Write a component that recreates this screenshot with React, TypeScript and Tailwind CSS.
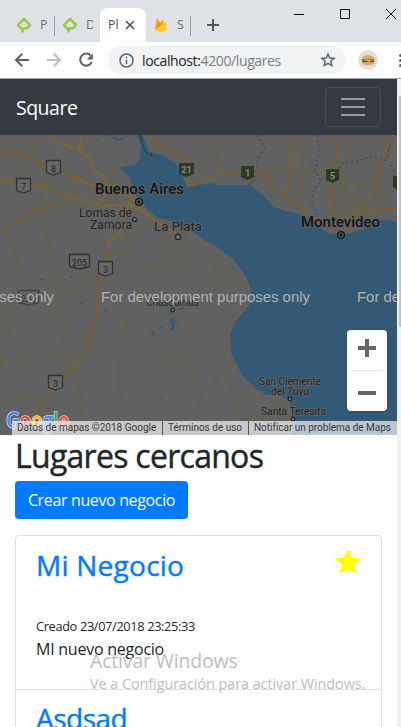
import React from "react";

const ui = "font-['Open_Sans','Noto_Sans',sans-serif]";

function LeafLogo() {
  return (
    <svg className="size-4 shrink-0" viewBox="0 0 16 16" fill="none" stroke="#98ca3f" strokeWidth="2.5" strokeLinejoin="round">
      <path d="M6.600 15.400v-2.800L2 8l6-6 6 6-3.300 3.300H7.200" />
    </svg>
  );
}

function FirebaseLogo() {
  return (
    <svg className="h-4 w-3.5 shrink-0" viewBox="0 0 14 16">
      <path d="M1 12.8 3 .8 6.5 6 8.5 2.6 12 12.8Z" fill="#ffa000" />
      <path d="M1 12.8 6.5 5.6 8.2 8Z" fill="#f57c00" />
      <path d="M1 12.8 11.6 4.2 13 12.8 7.3 15.8Z" fill="#ffca28" />
    </svg>
  );
}

function BrowserTabs() {
  return (
    <div className={`flex h-[42px] shrink-0 bg-[#dee1e6] text-[12.5px] text-[#6c7075] ${ui}`}>
      <div className="mt-[17px] ml-4 flex h-4 w-[38px] items-center gap-2">
        <LeafLogo />
        <span className="w-[7px] overflow-hidden">P</span>
      </div>
      <div className="mt-4 h-5 w-px bg-[#9a9ea3]" />
      <div className="mt-[17px] ml-[7px] flex h-4 w-[38px] items-center gap-2">
        <LeafLogo />
        <span className="w-[7px] overflow-hidden">D</span>
      </div>
      <div className="mt-2 flex h-[34px] w-[46px] items-center rounded-t-lg bg-white pl-2 text-[#4b4f54]">
        <span className="w-[10px] overflow-hidden whitespace-nowrap">Pl</span>
        <svg className="ml-[7px] size-[10px]" viewBox="0 0 10 10" stroke="#55595e" strokeWidth="1.7">
          <path d="m1 1 8 8m0-8L1 9" />
        </svg>
      </div>
      <div className="mt-[17px] ml-2 flex h-4 w-[36px] items-center gap-[9px]">
        <FirebaseLogo />
        <span className="w-[7px] overflow-hidden">S</span>
      </div>
      <div className="mt-4 h-5 w-px bg-[#9a9ea3]" />
      <svg className="mt-[19px] ml-4 size-3" viewBox="0 0 12 12" stroke="#55595e" strokeWidth="2">
        <path d="M6 0v12M0 6h12" />
      </svg>
      <svg className="ml-auto h-7 w-[110px] shrink-0" viewBox="0 0 110 28" fill="none" stroke="#111">
        <path d="M3 14.5h10M49.5 9.5h9v9h-9zM95 9l10 10m0-10L95 19" />
      </svg>
    </div>
  );
}

function AddressBar() {
  return (
    <div className="flex h-9 shrink-0 items-center bg-white">
      <svg className="h-9 w-[108px] shrink-0" viewBox="0 0 108 36" fill="none" stroke="#5f6368" strokeWidth="2">
        <path d="M29 18H16m6.2-6.2L16 18l6.2 6.2" />
        <path d="M47 18h13m-6.2-6.2L60 18l-6.2 6.2" stroke="#bcbec0" />
        <path d="M90.6 13.5a6 6 0 1 0 1.2 6.3" />
        <path d="M92.8 11.5v6h-6Z" fill="#5f6368" stroke="none" />
      </svg>
      <div className="flex h-7 w-[238px] shrink-0 items-center rounded-full bg-[#f1f3f4] pl-[11px]">
        <svg className="size-[15px]" viewBox="0 0 15 15" fill="none" stroke="#5f6368" strokeWidth="1.5">
          <circle cx="7.5" cy="7.5" r="6.5" />
          <path d="M7.5 6.6v4.6M7.5 3.7v1.6" />
        </svg>
        <span className={`ml-2 w-[140px] text-[14px] tracking-[-0.38px] whitespace-nowrap text-[#202124] ${ui}`}>
          localhost:<span className="text-[#777b80]">4200/lugares</span>
        </span>
        <svg className="ml-[38px] size-4 shrink-0" viewBox="0 0 16 16" fill="none" stroke="#5f6368" strokeWidth="1.5">
          <path d="m8 2 1.8 4 4.3.4-3.2 2.9.9 4.3L8 11.4l-3.8 2.2.9-4.3-3.2-2.9L6.200 6Z" />
        </svg>
      </div>
      <svg className="ml-3 size-5 shrink-0" viewBox="0 0 20 20">
        <circle cx="10" cy="10" r="10" fill="#dedede" />
        <path d="M4 9c0-5 12-5 12.500 0Z" fill="#d9a868" />
        <path d="M3.500 9h13v1.500h-13Z" fill="#6f8f42" />
        <path d="M4 10.500h12v1.800H4Z" fill="#6b3a25" />
        <path d="m6 9.500 8 .5-3 2Z" fill="#f5bb35" />
        <path d="M4 12.300h12.500c0 4-12.500 4-12.500 0Z" fill="#dda864" />
      </svg>
      <div className="ml-[21px] flex flex-col gap-[2px]">
        <i className="size-[3px] rounded-full bg-[#5f6368]" />
        <i className="size-[3px] rounded-full bg-[#5f6368]" />
        <i className="size-[3px] rounded-full bg-[#5f6368]" />
      </div>
    </div>
  );
}

type Label = { x: number; y: number; w: number; s: number; t: string; b?: boolean };

const labels: Label[] = [
  { x: 95, y: 59, w: 89, s: 14.5, t: "Buenos Aires", b: true },
  { x: 301, y: 92, w: 79, s: 14.5, t: "Montevideo", b: true },
  { x: 79, y: 82, w: 53, s: 12, t: "Lomas de" },
  { x: 90, y: 94, w: 42, s: 12, t: "Zamora" },
  { x: 154, y: 96, w: 48, s: 13, t: "La Plata" },
  { x: 146, y: 170.5, w: 53, s: 10.5, t: "Chascomús" },
  { x: 259, y: 250, w: 62, s: 10.5, t: "San Clemente" },
  { x: 271, y: 260, w: 38, s: 10.5, t: "del Tuyu" },
  { x: 261, y: 279.5, w: 65, s: 10.5, t: "Santa Teresita" },
];

const shields = [
  { x: 53.5, y: 33, n: "8", w: 14 },
  { x: 23.500, y: 51, n: "7", w: 14 },
  { x: 79.5, y: 127, n: "205", w: 20 },
  { x: 105.5, y: 134, n: "3", w: 14 },
  { x: 28.5, y: 163, n: "205", w: 20 },
  { x: 55.5, y: 248, n: "3", w: 14 },
];

const greenShields = [
  { x: 186.500, y: 35, n: "21", w: 15 },
  { x: 247.500, y: 38, n: "1", w: 13 },
  { x: 332.500, y: 41, n: "5", w: 13 },
  { x: 398, y: 48, n: "", w: 10 },
];

const cities = [
  { x: 134.500, y: 84.500, r: 2 },
  { x: 178, y: 102, r: 2.6 },
  { x: 172.700, y: 175, r: 1.8 },
  { x: 290, y: 264, r: 1.8 },
  { x: 293, y: 284, r: 1.8 },
];

function ZoomControl() {
  return (
    <div className="absolute top-[195px] right-[10px] flex h-[81px] w-10 flex-col items-center rounded-sm bg-white shadow">
      <svg className="h-10 w-10" viewBox="0 0 40 40" fill="#666">
        <path d="M18 9h4v7h7v4h-7v7h-4v-7h-7v-4h7Z" />
      </svg>
      <div className="h-px w-[30px] bg-[#e6e6e6]" />
      <svg className="h-10 w-10" viewBox="0 0 40 40" fill="#666">
        <path d="M11 20h18v4H11Z" />
      </svg>
    </div>
  );
}

function MapView() {
  return (
    <div className="relative h-[300px] w-[397px] shrink-0 overflow-hidden bg-[#616161]">
      <svg className="block h-[300px] w-[397px]" viewBox="0 0 397 300" fill="none">
        <path
          fill="#345975"
          d="M137 0 141 10 140 23 135 30 120 32 130 43 133 55 138 63 148 75 158 83 178 87 188 93 207 107 218 113 232 123 243 137 250 150 252 167 235 187 230 200 231 218 242 240 255 253 266 260 280 260 291 267 292 287 292 300H397V87L390 85 376 86 363 95 346 99 329 99 316 90 303 80 286 76 273 72 265 62 250 50 218 50 212 48 206 49 188 52 180 37 175 28 162 20 150 18 142 0Z"
        />
        <path
          fill="#345975"
          d="m108 0 11 4 8-3-5 4-5 1Zm8 5 2 8-2-5Zm-20-2 4 4-2 1Zm30 15 5 4-2-1ZM40 144h4v1h-4Zm30-3h2v2h-2ZM79 169l4-4v3l-4 3Zm25 5 5 2-3 1Zm46 24 3-2 2 5Zm8-5 5-2-2 3Zm12-18 2 8 4-2-2 4 1 7-3 4-3-1 3-4-2-6 2-3-3-3Zm9-2 5-1-3 3Zm-4 12 4-1-1 2-4 1Zm38 62 3-2 3 2Zm-54 17 2-1 2 2Zm85 20 2 1-1 2Z"
        />
        <g stroke="#68603f" strokeWidth="1">
          <path d="m35 0 3 20 8 20-5 20 4 27 5 28 5 26 13 17 3 3 14-12 20-8M0 91l4 5 8 7 7 32 9 12 14 1 16-9 12-4M82 0l-8 17-11 11-23-1-6 2-16 5-10 7 0 8M92 148l8-12 6-20 14 4 15-1M74 71l22 22 8 11 2 9M126 83l2 21 3 11M77 39l-4 19 10 16 10 7 10 2M109 31l-4 13-7 8 8 12 8 0" />
          <path d="M161 96l-15-8-7 13-4 2M157 98l13 11 14 19 36 16 30 8M166 110l-5 33-15 16-11 14M187 94l-7 31-38 12-7 8M199 105l17 5 2 8 5 10 4-5 5 3M218 114l-5 36M0 189l10-10 10-7 15-12 30-8M0 182l10 6 23 9 18 18 21 13-10-23 6-18-16-15-2-9M0 223l15 1 13-3 10 3 13-6 19 3 3 6M11 188 5 211 0 230M74 229l8 41-7 30M0 267l20-8 14 6 11 17 5 18M112 170l14 20-8 20 2 45 7 45M126 190l14 12 19 24 32 3M175 177l5 30 12 23 9 27-1 13-8 19-9 11M265 275l30-10-5 22-20 2M235 184l-7 20-3 15 6 33 8 33 14-4 24 5" />
          <path d="M208 0l-16 20-10 8M230 0l-10 15-20 20-2 12M212 12l11 26M300 0l12 29-6 30-10 16M295 0l8 15 1 25-14 31M266 34l23 1 29 3M321 35l14 34 3 13M315 39l38 8 25-2 19-12M348 37l-5 25-15 20M350 62l17-15 20 25-45 8-15-2M331 32l13-10 20-4M397 1l-14 4-12 16M397 17l-27 17 15 30 12 1M331 55l23 13 10 4M322 60l30 3 8-7M339 37l6 38-6 17M358 43l-4 22-17 25M377 38l-3 28-32 25" />
        </g>
        <g stroke="#7c6226" strokeWidth="1.4">
          <path d="m0 14 20 6 15 5 8 6 10 1 13 8 15 3M0 47l9-3 12 6h25l9 7 13 3M0 95l35-19 40-12M108 115l-2 24-8 11M101 150l-5 17 2 17-9 15 0 15-18 21-24 27-13 16-4 14M148 0l7 8 16 7 10 5 7 32 32-13 22-2 18 0 14 12M334 0l4 12-4 18-4 25 5 40M291 0l1 32-6 29M388 0l-1 19-8 12-7 27-27 29M266 46l23 19 22 14 13 14M345 96l14-16 24-7 14 1" />
        </g>
        <g stroke="#78673b" strokeWidth="2.2">
          <path d="m50 0 4 6 25 9 3-15M79 15l10 8 4 11 10 8 5 8M68 60l24 8 10 3 33-1M97 69l15-15M107 110l14-15 7-22 4-15M80 44l9 6 28 0M111 53l14 7M127 70l18 8 15 11 16 9M116 51l19 16M135 67l8 11" />
        </g>
        <g stroke="#464b52" strokeWidth="1.400" strokeDasharray="2 3">
          <path d="m257 0 8 13-7 11-3 19-6 7M317 0l2 16-4 20 6 10-6 7-2 8-3 4 7 15M390 10l-4 15-13-4-18 6-13 1-6 10M391 30l4 10" />
        </g>
        <path d="m140 0 5 16 6 5 1-4" stroke="#32363a" />
        <path d="m312 71 6 6 8 4" stroke="#356c96" strokeWidth="1.500" />

        {shields.map((s, i) => (
          <g key={i} opacity={i === 4 ? 0.65 : 1}>
            <path
              d={`M${s.x - s.w / 2} ${s.y - 7.500}h${s.w}v12L${s.x} ${s.y + 7}L${s.x - s.w / 2} ${s.y + 4.500}Z`}
              fill="#666" stroke="#303030" strokeWidth="1.300" strokeLinejoin="round"
            />
            <text x={s.x} y={s.y + 3.500} textAnchor="middle" fill="#222" className="font-[Roboto,sans-serif] text-[9px]">{s.n}</text>
          </g>
        ))}
        {greenShields.map((s, i) => (
          <g key={i}>
            <path d={`M${s.x - s.w / 2} ${s.y - 7}h${s.w}v11L${s.x} ${s.y + 7}L${s.x - s.w / 2} ${s.y + 4}Z`} fill="#2d3926" />
            <text x={s.x} y={s.y + 3} textAnchor="middle" fill="#858a82" className="font-[Roboto,sans-serif] text-[9px] font-bold">{s.n}</text>
          </g>
        ))}
        {cities.map((c, i) => (
          <circle key={i} cx={c.x} cy={c.y} r={c.r} stroke="#222" strokeWidth="1.200" fill="#777" />
        ))}
        {[[139, 67], [341, 100]].map(([x, y]) => (
          <g key={x}>
            <circle cx={x} cy={y} r="3.400" fill="#666" stroke="#161616" strokeWidth="1.400" />
            <circle cx={x} cy={y} r="1.700" fill="#161616" />
          </g>
        ))}
        {labels.map((l) => (
          <text
            key={l.t} x={l.x} y={l.y} textLength={l.w} lengthAdjust="spacingAndGlyphs" fontSize={l.s}
            fontWeight={l.b ? 500 : 400} fill={l.b ? "#121212" : "#242424"}
            stroke="#686868" strokeWidth="2" strokeOpacity=".65" paintOrder="stroke"
            className="font-[Roboto,sans-serif]"
          >
            {l.t}
          </text>
        ))}
        <g fill="#b2b2b2" className="font-['Liberation_Sans',Arial,sans-serif] text-[15px]">
          <text x="-155" y="167" textLength="209" lengthAdjust="spacingAndGlyphs">For development purposes only</text>
          <text x="101" y="167" textLength="209" lengthAdjust="spacingAndGlyphs">For development purposes only</text>
          <text x="357" y="167" textLength="209" lengthAdjust="spacingAndGlyphs">For development purposes only</text>
        </g>
        <text x="6" y="293" textLength="63" lengthAdjust="spacingAndGlyphs" stroke="#d5d5d5" strokeWidth="1.600" paintOrder="stroke" className="font-['Open_Sans',sans-serif] text-[22px] font-semibold">
          <tspan fill="#4285f4">G</tspan><tspan fill="#e94b3c">o</tspan><tspan fill="#f4b51e">o</tspan><tspan fill="#4285f4">g</tspan><tspan fill="#34a853">l</tspan><tspan fill="#e94b3c">e</tspan>
        </text>
      </svg>
      <div className="absolute right-0 bottom-0 flex h-[14px] w-[385px] bg-[#f5f5f5]/70 font-[Roboto,sans-serif] text-[10px] leading-[14px] whitespace-nowrap text-[#383838]">
        <span className="w-[150px] pl-[5px]">Datos de mapas ©2018 Google</span>
        <span className="w-[86px] border-l border-[#555] pl-[5px]">Términos de uso</span>
        <span className="flex-1 border-l border-[#555] pl-[5px] tracking-[-0.02px]">Notificar un problema de Maps</span>
      </div>
      <ZoomControl />
    </div>
  );
}

function Places() {
  return (
    <main className={`flex flex-col items-start px-[15px] text-[#212529] ${ui}`}>
      <h2 className="mt-[2px] mb-2 text-[32px] leading-[38px] font-medium tracking-[-0.72px] whitespace-nowrap [-webkit-text-stroke:0.4px]">Lugares cercanos</h2>
      <button className="-mt-[2px] h-[38px] w-[173px] rounded bg-[#007bff] text-[16px] tracking-[-0.36px] whitespace-nowrap text-white">
        Crear nuevo negocio
      </button>
      <section className="mt-4 w-[367px] rounded-t border border-[#dfdfdf]">
        <article className="h-[154px] border-b border-[#dfdfdf] px-5 pt-3">
          <div className="flex h-[34px] justify-between">
            <h3 className="text-[28px] leading-[34px] font-medium tracking-[0.25px] text-[#007bff] [-webkit-text-stroke:0.4px]">Mi Negocio</h3>
            <svg className="mt-px size-[26px]" viewBox="0 0 26 26" fill="#ff0">
              <path d="m13 0 3.900 8.300 9.100 1.200-6.600 6.300 1.900 9-8.300-4.300-8.300 4.300 1.900-9L0 9.500l9.100-1.200Z" />
            </svg>
          </div>
          <p className="mt-8 text-[12.8px] leading-6 tracking-[-0.36px]">Creado 23/07/2018 23:25:33</p>
          <p className="-mt-px text-[16px] leading-6 tracking-[-0.24px]">MI nuevo negocio</p>
        </article>
        <article className="h-[154px] px-5 pt-[11px]">
          <h3 className="text-[28px] leading-[34px] font-medium tracking-[-0.5px] text-[#007bff] [-webkit-text-stroke:0.4px]">Asdsad</h3>
        </article>
      </section>
    </main>
  );
}

export default function App() {
  return (
    <div className="relative flex h-[727px] w-[401px] flex-col overflow-hidden bg-white">
      <BrowserTabs />
      <AddressBar />
      <div className="h-px shrink-0 bg-[#a5a6aa]" />
      <div className="flex min-h-0 flex-1">
        <div className="flex w-[397px] shrink-0 flex-col overflow-hidden">
          <nav className="flex h-14 shrink-0 items-center justify-between bg-[#343a40] pr-4 pl-4">
            <span className={`mt-[2px] text-[19.5px] tracking-[-0.5px] text-white ${ui}`}>Square</span>
            <button className="flex h-10 w-14 flex-col items-center justify-center gap-[6px] rounded border border-[#484e53]">
              <i className="h-[2px] w-6 bg-[#999c9f]" />
              <i className="h-[2px] w-6 bg-[#999c9f]" />
              <i className="h-[2px] w-6 bg-[#999c9f]" />
            </button>
          </nav>
          <MapView />
          <Places />
        </div>
        <div className="w-1 bg-[#f1f1f1] pt-[17px] pl-[2px]">
          <div className="h-[231px] bg-[#c1c1c1]" />
        </div>
      </div>
      <div className={`pointer-events-none absolute top-[649px] left-[90px] whitespace-nowrap text-[#bdbdbd] ${ui}`}>
        <p className="text-[19.5px] leading-6 tracking-[-0.17px]">Activar Windows</p>
        <p className="text-[14.4px] leading-[22px] tracking-[-0.05px]">Ve a Configuración para activar Windows.</p>
      </div>
    </div>
  );
}
